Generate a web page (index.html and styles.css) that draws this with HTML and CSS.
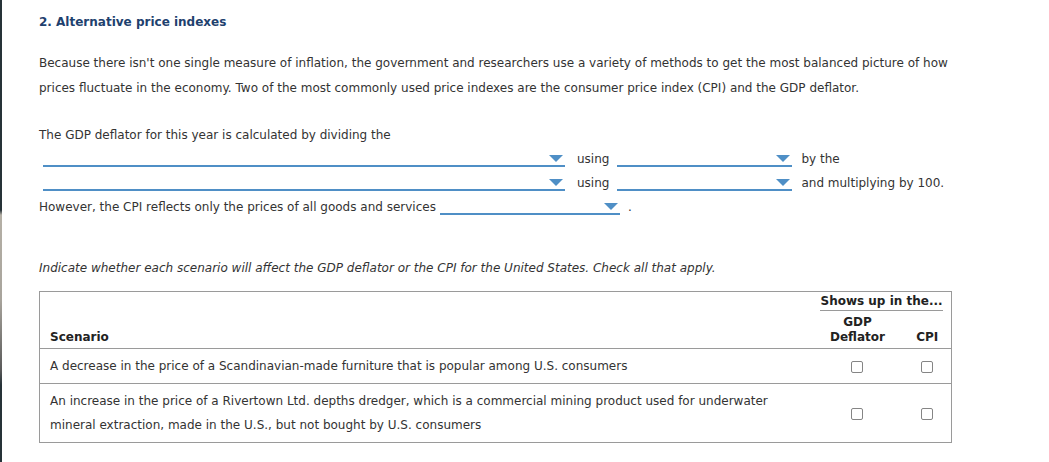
FILE: index.html
```html
<!DOCTYPE html>
<html lang="en">
<head>
<meta charset="utf-8">
<title>Alternative price indexes</title>
<link rel="stylesheet" href="styles.css">
</head>
<body>
<div class="page">
  <div class="edge"></div>
  <main class="content">
    <h2 class="title">2. Alternative price indexes</h2>
    <p class="intro">Because there isn't one single measure of inflation, the government and researchers use a variety of methods to get the most balanced picture of how prices fluctuate in the economy. Two of the most commonly used price indexes are the consumer price index (CPI) and the GDP deflator.</p>
    <p class="lead">The GDP deflator for this year is calculated by dividing the</p>
    <div class="fill-row indent">
      <span class="dd dd-wide"><span class="arrow"></span></span>
      <span class="word using">using</span>
      <span class="dd dd-mid"><span class="arrow"></span></span>
      <span class="word after">by the</span>
    </div>
    <div class="fill-row indent">
      <span class="dd dd-wide"><span class="arrow"></span></span>
      <span class="word using">using</span>
      <span class="dd dd-mid"><span class="arrow"></span></span>
      <span class="word after">and multiplying by 100.</span>
    </div>
    <div class="fill-row">
      <span class="word">However, the CPI reflects only the prices of all goods and services</span>
      <span class="dd dd-cpi"><span class="arrow"></span></span>
      <span class="word dot">.</span>
    </div>
    <p class="instr">Indicate whether each scenario will affect the GDP deflator or the CPI for the United States. Check all that apply.</p>
    <table class="grid">
      <colgroup>
        <col class="c-scen">
        <col class="c-gdp">
        <col class="c-cpi">
      </colgroup>
      <thead>
        <tr class="head-top">
          <th class="scen-head"></th>
          <th class="group" colspan="2"><span class="group-label">Shows up in the...</span></th>
        </tr>
        <tr class="head-bottom">
          <th class="scen-head">Scenario</th>
          <th class="col-gdp">GDP<br>Deflator</th>
          <th class="col-cpi">CPI</th>
        </tr>
      </thead>
      <tbody>
        <tr class="row-one">
          <td class="scen">A decrease in the price of a Scandinavian-made furniture that is popular among U.S. consumers</td>
          <td class="col-gdp"><span class="box"></span></td>
          <td class="col-cpi"><span class="box"></span></td>
        </tr>
        <tr class="row-two">
          <td class="scen">An increase in the price of a Rivertown Ltd. depths dredger, which is a commercial mining product used for underwater mineral extraction, made in the U.S., but not bought by U.S. consumers</td>
          <td class="col-gdp"><span class="box"></span></td>
          <td class="col-cpi"><span class="box"></span></td>
        </tr>
      </tbody>
    </table>
  </main>
</div>
</body>
</html>
```

FILE: styles.css
```css
* { box-sizing: border-box; }

html, body {
  margin: 0;
  padding: 0;
  background: #ffffff;
}

body {
  font-family: "DejaVu Sans", Verdana, sans-serif;
  font-size: 12px;
  color: #333333;
}

.page {
  display: flex;
  min-height: 462px;
}

.edge {
  width: 2px;
  flex: 0 0 2px;
  background: linear-gradient(to bottom,
    #263238 0px, #263238 210px,
    #b5b0a6 215px, #a8a49c 300px,
    #5a5a5a 370px, #263238 385px, #263238 100%);
}

.content {
  flex: 1;
  padding-left: 37px;
  padding-right: 90px;
}

.title {
  margin: 12px 0 0 0;
  font-size: 12px;
  line-height: 20px;
  font-weight: bold;
  color: #1e416e;
}

.intro {
  margin: 19px 0 0 0;
  line-height: 25px;
  max-width: 920px;
}

.lead {
  margin: 22px 0 0 0;
  line-height: 24px;
}

.fill-row {
  display: flex;
  align-items: flex-start;
  height: 24px;
}

.fill-row.indent {
  padding-left: 4px;
}

.word {
  line-height: 24px;
  white-space: nowrap;
}

.using {
  margin: 0 8px 0 12px;
}

.after {
  margin-left: 9px;
}

.dot {
  margin-left: 8px;
}

.dd {
  position: relative;
  display: block;
  flex: 0 0 auto;
  height: 20px;
  border-bottom: 2px solid #4f8fc6;
}

.dd-wide { width: 522px; }
.dd-mid { width: 175px; }
.dd-cpi { width: 180px; margin-left: 4px; }

.arrow {
  position: absolute;
  right: 2px;
  top: 8px;
  width: 0;
  height: 0;
  border-left: 7px solid transparent;
  border-right: 7px solid transparent;
  border-top: 7px solid #4f8fc6;
}

.instr {
  margin: 39px 0 0 0;
  line-height: 20px;
  font-style: italic;
}

.grid {
  margin-top: 13px;
  width: 913px;
  border-collapse: collapse;
  border: 1px solid #9a9a9a;
  table-layout: fixed;
}

.c-gdp { width: 74px; }
.c-cpi { width: 57px; }

.grid th {
  font-weight: bold;
  color: #222222;
  padding: 0;
}

.head-top th {
  height: 19px;
  padding-top: 1px;
  vertical-align: top;
}

.group {
  text-align: right;
  padding-right: 9px !important;
}

.group-label {
  display: inline-block;
  line-height: 16px;
  border-bottom: 1px solid #9a9a9a;
  padding-bottom: 1px;
  white-space: nowrap;
}

.head-bottom th {
  line-height: 15px;
  padding: 4px 0 3px 0;
  vertical-align: bottom;
}

.scen-head {
  text-align: left;
  padding-left: 10px !important;
}

.col-gdp {
  text-align: center;
}

.col-cpi {
  text-align: center;
  padding-left: 19px !important;
  padding-right: 10px !important;
}

.grid tbody tr {
  border-top: 1px solid #9a9a9a;
}

.grid td {
  vertical-align: middle;
  padding: 0;
}

.grid td.scen {
  text-align: left;
  padding: 5px 10px 4px 10px;
  line-height: 25px;
}

.row-two td.scen {
  padding: 5px 10px 5px 10px;
  line-height: 24px;
}

.box {
  display: inline-block;
  width: 12px;
  height: 12px;
  border: 1px solid #858585;
  border-radius: 2px;
  background: #ffffff;
  vertical-align: middle;
}
```
